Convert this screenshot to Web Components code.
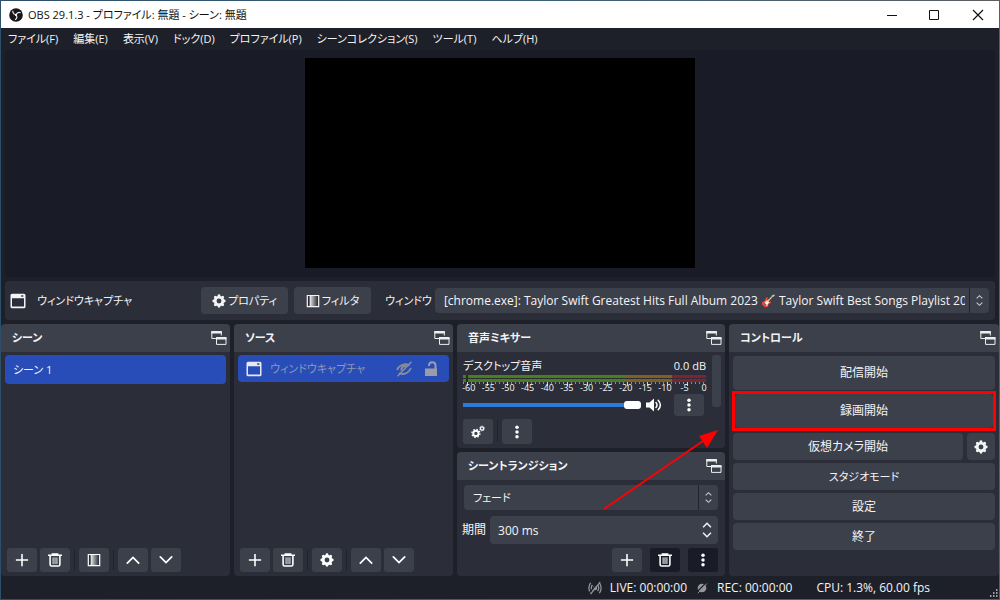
<!DOCTYPE html>
<html lang="ja">
<head>
<meta charset="utf-8">
<title>OBS 29.1.3 - プロファイル: 無題 - シーン: 無題</title>
<style>
html, body { height: 100%; margin: 0; }
body {
  --frame: #1e2029; --panel: #2b2e38; --raised: #3c404b; --deep: #191b26; --accent: #284cb8;
  background: linear-gradient(90deg, #2c5068, #38617c 50%, #5c5f62);
  color: #f4f4f6;
  font: 12px/16px "Open Sans", "Noto Sans CJK JP", sans-serif;
  font-feature-settings: "palt";
}
</style>
</head>
<body>
<obs-window></obs-window>
<script>
const define = (name, html, setup) => {
  const template = document.createElement('template');
  template.innerHTML = html;
  customElements.define(name, class extends HTMLElement {
    constructor() {
      super();
      this.attachShadow({ mode: 'open' }).append(template.content.cloneNode(true));
    }
    connectedCallback() { if (setup) setup(this, this.shadowRoot); }
  });
};

const S = 'fill="none" stroke="currentColor"';
const ICONS = {
  plus: `<path ${S} stroke-width="1.8" d="M8 1v14M1 8h14"/>`,
  trash: `<path ${S} stroke-width="1.8" d="M0 2.600h16M5 2V1.200h6V2M2.400 3v10q0 1.900 1.900 1.900h7.400q1.900 0 1.900-1.900V3"/><path fill="#aeb0b8" d="M5 5h6v7.500H5z"/><path stroke="#555965" stroke-width=".6" d="M7 5v7.500M9 5v7.500"/>`,
  filter: `<defs><linearGradient id="g"><stop stop-color="#fff"/><stop offset=".25" stop-color="#bbb"/><stop offset="1" stop-color="#24262e"/></linearGradient></defs><path fill="url(#g)" d="M4 2h10v12H4z"/><path ${S} stroke-width="1.4" d="M1.5 1.7h13v12.6h-13z"/><path fill="#24262e" d="M2.5 2.5h1.4v11H2.5z"/>`,
  up: `<path ${S} stroke-width="2" stroke-linecap="round" d="M1.500 11.500L8 5l6.500 6.500"/>`,
  down: `<path ${S} stroke-width="2" stroke-linecap="round" d="M1.500 4.500L8 11l6.500-6.500"/>`,
  gear: `<circle cx="8" cy="8" r="4.400" ${S} stroke-width="3.200"/><path stroke="currentColor" stroke-width="3.200" stroke-linecap="round" d="M8 2.300V2M8 13.700v.3M2.300 8H2M13.700 8h.3M4 4l-.2-.2M12 12l.2.2M4 12l-.2.2M12 4l.2-.2"/>`,
  gears: `<circle cx="5.6" cy="9.6" r="3" ${S} stroke-width="2.2"/><circle cx="5.6" cy="9.6" r="4.6" ${S} stroke-width="1.4" stroke-dasharray="1.8 1.8"/><circle cx="12.6" cy="4" r="1.8" ${S} stroke-width="1.4"/><circle cx="12.6" cy="4" r="2.8" ${S} stroke-width=".9" stroke-dasharray="1.1 1.1"/>`,
  dots: `<g fill="currentColor"><circle cx="8" cy="2.5" r="2"/><circle cx="8" cy="8" r="2"/><circle cx="8" cy="13.5" r="2"/></g>`,
  window: `<path fill="currentColor" fill-rule="evenodd" d="M2 .8h12q1.500 0 1.500 1.500v11.400q0 1.500-1.500 1.500H2q-1.500 0-1.500-1.500V2.300Q.5.8 2 .8zM2 5.300v8.200h12V5.300z"/><path stroke="#4a4e5a" stroke-width="1" d="M11.300 2l2 2M13.300 2l-2 2"/>`,
  float: `<path ${S} stroke-width="1" d="M5 8.500H.8V1.500h9.500v4"/><path fill="currentColor" d="M.3.9h10.500v2.500H.3zM5 6.900h10.500v2.500H5z"/><path ${S} stroke-width="1" d="M5.500 8v6.400H15V8"/>`,
  eye: `<path ${S} stroke-width="1.800" d="M1 9c2-5 9-7.500 12.500-4.500M15 7c-2 5-8 7.500-12 5"/><path ${S} stroke-width="2" d="M5.500 9.500C5 6 8 4 10.500 5.500"/><path ${S} stroke-width="1.500" d="M15.500.8L1.500 15.200"/>`,
  lock: `<path fill="currentColor" d="M2 7.500h12V15H2z"/><path ${S} stroke-width="2" d="M6 5V4.500C6 0 12.500 0 12.500 4.500V8"/>`,
  speaker: `<path fill="currentColor" d="M0 5.500h3.500L8 1.500v13l-4.500-4H0z"/><path ${S} stroke-width="1.500" stroke-linecap="round" d="M10 5.500q2 2.500 0 5M12.200 3.200q4.300 4.800 0 9.600"/>`,
  spin: `<path ${S} stroke-width="1.300" d="M4.500 5.500L8 2l3.500 3.500M4.500 10.500L8 14l3.500-3.500"/>`,
  live: `<path ${S} stroke-width="1.400" d="M3 2Q-1 8 3 14M13 2q4 6 0 12M5 4.500Q2.500 8 5 11.500M11 4.500q2.500 3.500 0 7"/><circle cx="8" cy="8" r="2.500" fill="currentColor"/><path stroke="#1e2029" stroke-width="1.500" d="M13 0L1 14"/><path ${S} stroke-width="1.300" d="M14 1L3 15"/>`,
  rec: `<circle cx="8" cy="8" r="5.800" fill="currentColor"/><path stroke="#1e2029" stroke-width="1.500" d="M13.500 1L1.500 13"/><path ${S} stroke-width="1.300" d="M14.500 2L2.500 15"/>`,
  logo: `<circle cx="8" cy="8" r="7.800" fill="#17171b"/><g fill="none" stroke="#e8e8e8" stroke-width="1.300"><path d="M4.300 3q0 4 4 4.700"/><path d="M13.300 5.500q-3.500-1.500-5.300 2.300"/><path d="M6.800 13.500q3.500-2 1.500-5.500"/></g><circle cx="8" cy="8" r="1.300" fill="#fff"/>`,
  min: `<path ${S} d="M3 8.500h10"/>`,
  max: `<path ${S} stroke-width="1" d="M2.500 3.500h9v9h-9z"/>`,
  close: `<path ${S} stroke-width="1.200" d="M3 3l10 10M13 3L3 13"/>`,
  grip: `<g fill="#c8c8cc"><path d="M12 3h2v2h-2zM12 7h2v2h-2zM12 11h2v2h-2zM8 7h2v2H8zM8 11h2v2H8zM4 11h2v2H4z"/></g>`
};
define('obs-icon', `<style>
:host { display: inline-flex; flex: none; width: 16px; height: 16px; }
svg { width: 100%; height: 100%; display: block; }
</style><svg viewBox="0 0 16 16" aria-hidden="true"></svg>`,
  (el, root) => { root.querySelector('svg').innerHTML = ICONS[el.getAttribute('name')]; });

define('tool-button', `<style>
:host { display: block; flex: none; width: 30px; height: 24px; }
button { width: 100%; height: 100%; padding: 0; border: 0; border-radius: 3px; background: var(--raised); color: #fff; display: grid; place-items: center; }
:host([dark]) button { background: var(--deep); }
obs-icon { width: 14px; height: 14px; }
</style><button><obs-icon></obs-icon></button>`,
  (el, root) => {
    root.querySelector('button').setAttribute('aria-label', el.getAttribute('label'));
    const icon = document.createElement('obs-icon');
    icon.setAttribute('name', el.getAttribute('icon'));
    root.querySelector('obs-icon').replaceWith(icon);
  });

define('push-button', `<style>
:host { display: block; flex: none; }
button { width: 100%; height: 100%; padding: 0 8px; border: 0; border-radius: 4px; background: var(--raised); color: inherit; font: inherit; font-feature-settings: inherit; display: flex; align-items: center; justify-content: center; gap: 2px; white-space: nowrap; }
</style><button><slot></slot></button>`);

define('select-box', `<style>
:host { display: block; position: relative; min-width: 0; height: 25px; }
select { appearance: none; width: 100%; height: 100%; border: 0; border-radius: 4px; background: linear-gradient(#22242d, #22242d) right 19px top / 1px 100% no-repeat var(--raised); color: inherit; font: inherit; font-feature-settings: inherit; padding: 0 24px 0 9px; }
.spin { position: absolute; right: 3px; top: 6px; width: 13px; height: 13px; color: #c8cad0; pointer-events: none; }
</style><select></select><obs-icon class="spin" name="spin"></obs-icon>`,
  (el, root) => {
    const select = root.querySelector('select');
    select.setAttribute('aria-label', el.getAttribute('label'));
    select.add(new Option(el.getAttribute('value')));
  });

define('title-bar', `<style>
:host { display: flex; flex: none; align-items: center; height: 27px; padding-left: 8px; background: #fff; color: #111; font-size: 11px; }
.text { flex: 1; margin-left: 5px; white-space: nowrap; }
button { width: 43px; height: 26px; border: 0; padding: 0; background: none; color: #111; display: grid; place-items: center; }
.logo { width: 14px; height: 14px; }
</style><obs-icon class="logo" name="logo"></obs-icon><span class="text">OBS 29.1.3 - プロファイル: 無題 - シーン: 無題</span>
<button aria-label="最小化"><obs-icon name="min"></obs-icon></button><button aria-label="最大化"><obs-icon name="max"></obs-icon></button><button aria-label="閉じる"><obs-icon name="close"></obs-icon></button>`);

define('menu-bar', `<style>
:host { display: block; flex: none; }
nav { display: flex; align-items: center; gap: 15px; height: 22px; padding: 0 7px; font-size: 11px; }
a { color: inherit; text-decoration: none; white-space: nowrap; }
</style><nav><a href="#file">ファイル(F)</a><a href="#edit">編集(E)</a><a href="#view">表示(V)</a><a href="#dock">ドック(D)</a><a href="#profile">プロファイル(P)</a><a href="#scenes">シーンコレクション(S)</a><a href="#tools">ツール(T)</a><a href="#help">ヘルプ(H)</a></nav>`);

define('preview-area', `<style>
:host { display: flex; flex: 1; min-height: 100px; justify-content: center; padding: 8px 0 9px; margin: 0 4px; background: var(--deep); }
div { width: 39.3%; background: #000; }
</style><div></div>`);

define('source-toolbar', `<style>
:host { display: flex; flex: none; align-items: center; height: 39px; margin: 4px 4px; padding: 0 6px 0 5px; background: var(--panel); border-radius: 4px; }
.name { flex: 1 1 0; margin-left: 11px; white-space: nowrap; }
.jp { font-size: 11px; }
push-button { height: 27px; margin-right: 6px; }
push-button obs-icon { width: 14px; height: 14px; }
.props { width: 87px; } .filt { width: 77px; }
.label { margin: 0 3px 0 8px; }
select-box { flex: 0 0 56.6%; }
</style><obs-icon name="window"></obs-icon><span class="name jp">ウィンドウキャプチャ</span>
<push-button class="props jp"><obs-icon name="gear"></obs-icon>プロパティ</push-button>
<push-button class="filt jp"><obs-icon name="filter"></obs-icon>フィルタ</push-button>
<span class="label jp">ウィンドウ</span>
<select-box label="ウィンドウ" value="[chrome.exe]: Taylor Swift Greatest Hits Full Album 2023 🎸 Taylor Swift Best Songs Playlist 2023"></select-box>`);

define('dock-panel', `<style>
:host { display: flex; flex-direction: column; min-width: 0; background: var(--panel); border-radius: 4px; overflow: hidden; }
header { display: flex; flex: none; align-items: center; justify-content: space-between; height: 28px; padding: 0 3px 0 11px; background: var(--raised); }
h2 { margin: 0; font-size: 11px; line-height: 16px; font-weight: 600; }
button { border: 0; padding: 0; background: none; color: #eee; display: flex; }
.body { flex: 1; display: flex; flex-direction: column; }
</style><header><h2></h2><button aria-label="フロート"><obs-icon name="float"></obs-icon></button></header><div class="body"><slot></slot></div>`,
  (el, root) => { root.querySelector('h2').textContent = el.getAttribute('heading'); });

define('tool-row', `<style>
:host { display: flex; gap: 3px; margin-top: auto; padding: 0 6px 4px; }
::slotted(i) { width: 1px; height: 20px; margin: 2px 1px; background: #20222a; }
</style><slot></slot>`);

define('list-row', `<style>
:host { display: flex; align-items: center; height: 29px; margin: 3px 4px; padding: 0 8px; border-radius: 4px; background: var(--accent); font-size: 11px; }
:host([source]) { height: 27px; color: #8f98b4; }
</style><slot></slot>`);

define('audio-mixer', `<style>
:host { display: flex; flex: 1; flex-direction: column; padding: 3px 4px 4px 6px; }
.view { display: flex; height: 60px; gap: 6px; }
.channel { flex: 1; min-width: 0; }
.top { display: flex; justify-content: space-between; height: 20px; line-height: 21px; font-size: 11px; }
.bar { height: 3px; margin-bottom: 1px; background: linear-gradient(90deg, #4c7d1c 3px, #23301c 3px 5px, #4c7d1c 5px 67%, #80601c 67% 86%, #7d2430 86%); }
.scale { height: 4px; margin-top: -1px; background: repeating-linear-gradient(90deg, transparent 0 4px, #d0d0d5 4px 5px, transparent 5px 20px) 0 0, repeating-linear-gradient(90deg, #888b94 0 1px, transparent 1px 4px) 0 0 / 100% 2px no-repeat; }
.nums { display: grid; grid-template-columns: repeat(13, 1fr); margin: -3px -8px 0 -4px; font-size: 9px; line-height: 10px; text-align: center; }
.fader { display: flex; align-items: center; height: 22px; margin-top: 1px; }
input { appearance: none; flex: 1; min-width: 0; margin: 0; height: 8px; background: linear-gradient(#2c7bd8, #2c7bd8) center / 100% 4px no-repeat; }
input::-webkit-slider-thumb { appearance: none; width: 17px; height: 8px; border-radius: 3px; background: #fff; }
.mute { border: 0; padding: 0; margin: 0 12px 0 5px; background: none; color: #fff; display: flex; }
.fader tool-button { height: 22px; margin-right: 2px; }
.bar-v { width: 9px; height: 52px; border-radius: 3px; background: var(--raised); }
.tools { display: flex; gap: 4px; margin-top: auto; }
.tools i { width: 1px; height: 20px; margin-top: 2px; background: #20222a; }
.tools tool-button { height: 25px; }
</style>
<div class="view"><div class="channel">
<div class="top"><span>デスクトップ音声</span><span>0.0 dB</span></div>
<div class="bar"></div><div class="bar"></div><div class="scale"></div>
<div class="nums"><span>-60</span><span>-55</span><span>-50</span><span>-45</span><span>-40</span><span>-35</span><span>-30</span><span>-25</span><span>-20</span><span>-15</span><span>-10</span><span>-5</span><span>0</span></div>
<div class="fader"><input type="range" value="100" aria-label="デスクトップ音声"><button class="mute" aria-label="ミュート"><obs-icon name="speaker"></obs-icon></button><tool-button icon="dots" label="メニュー"></tool-button></div>
</div><div class="bar-v"></div></div>
<div class="tools"><tool-button icon="gears" label="詳細設定"></tool-button><i></i><tool-button icon="dots" label="メニュー"></tool-button></div>`);

define('scene-transition', `<style>
:host { display: flex; flex: 1; flex-direction: column; padding: 5px 7px 4px 5px; }
select-box { margin-left: 2px; font-size: 11px; }
.row { display: flex; align-items: center; gap: 4px; margin-top: 6px; }
.field { position: relative; flex: 1; height: 28px; }
input { box-sizing: border-box; width: 100%; height: 100%; border: 0; border-radius: 4px; padding: 0 8px; background: var(--raised); color: inherit; font: inherit; }
.spin { position: absolute; right: 2px; top: 4px; width: 18px; height: 20px; }
.tools { display: flex; justify-content: flex-end; gap: 8px; margin-top: auto; }
</style><select-box label="トランジション" value="フェード"></select-box>
<div class="row"><label for="time">期間</label><div class="field"><input id="time" value="300 ms"><obs-icon class="spin" name="spin"></obs-icon></div></div>
<div class="tools"><tool-button icon="plus" label="追加"></tool-button><tool-button dark icon="trash" label="削除"></tool-button><tool-button dark icon="dots" label="メニュー"></tool-button></div>`);

define('control-list', `<style>
:host { display: flex; flex-direction: column; gap: 4px; padding: 4px 4px 0; }
push-button { height: 27px; }
.big { height: 34px; }
.record { height: 34px; border: 3px solid #f00; margin: -3px -1px -2px; }
.pair { display: flex; gap: 4px; }
.pair push-button:first-child { flex: 1; }
.rest { display: flex; flex-direction: column; gap: 3px; }
.kana { font-size: 11px; }
.gear { width: 28px; }
.gear obs-icon { width: 14px; height: 14px; }
</style><push-button class="big">配信開始</push-button><push-button class="record">録画開始</push-button>
<div class="rest"><div class="pair"><push-button>仮想カメラ開始</push-button><push-button class="gear"><obs-icon name="gear"></obs-icon></push-button></div>
<push-button class="kana">スタジオモード</push-button><push-button>設定</push-button><push-button>終了</push-button></div>`);

define('status-bar', `<style>
:host { display: flex; flex: none; align-items: center; justify-content: flex-end; height: 23px; font-size: 12px; white-space: nowrap; }
obs-icon { color: #96979c; }
.live { width: 18px; height: 14px; margin-right: 6px; } .rec { width: 12px; height: 12px; margin: 0 9px; }
.cpu { margin: 0 57px 0 24px; }
.grip { align-self: flex-end; width: 12px; height: 12px; }
</style><obs-icon class="live" name="live"></obs-icon><span>LIVE: 00:00:00</span><obs-icon class="rec" name="rec"></obs-icon><span>REC: 00:00:00</span><span class="cpu">CPU: 1.3%, 60.00 fps</span><obs-icon class="grip" name="grip"></obs-icon>`);

define('obs-window', `<style>
:host { display: flex; flex-direction: column; box-sizing: border-box; min-height: 100vh; padding: 1px; }
main { position: relative; flex: 1; display: flex; flex-direction: column; background: var(--frame); }
.docks { display: grid; flex: none; grid-template-columns: 229fr 219fr 268fr 270fr; gap: 4px; height: 252px; }
.stack { display: flex; flex-direction: column; gap: 4px; min-width: 0; }
.stack > :first-child, .stack > :last-child { flex: 1; }
.src { flex: 1; margin-left: 8px; }
.eye { color: #8a8f9e; margin-right: 11px; } .lock { color: #9a9da8; margin-right: 2px; }
.arrow { position: absolute; left: 602px; top: 426px; width: 116px; height: 84px; pointer-events: none; }
</style>
<main><title-bar></title-bar><menu-bar></menu-bar><preview-area></preview-area><source-toolbar></source-toolbar>
<div class="docks">
<dock-panel heading="シーン"><list-row>シーン 1</list-row><tool-row><tool-button icon="plus" label="追加"></tool-button><tool-button icon="trash" label="削除"></tool-button><i></i><tool-button icon="filter" label="フィルタ"></tool-button><i></i><tool-button icon="up" label="上へ"></tool-button><tool-button icon="down" label="下へ"></tool-button></tool-row></dock-panel>
<dock-panel heading="ソース"><list-row source><obs-icon name="window" style="color:#e6e9f4"></obs-icon><span class="src">ウィンドウキャプチャ</span><obs-icon class="eye" name="eye"></obs-icon><obs-icon class="lock" name="lock"></obs-icon></list-row><tool-row><tool-button icon="plus" label="追加"></tool-button><tool-button icon="trash" label="削除"></tool-button><i></i><tool-button icon="gear" label="プロパティ"></tool-button><i></i><tool-button icon="up" label="上へ"></tool-button><tool-button icon="down" label="下へ"></tool-button></tool-row></dock-panel>
<div class="stack"><dock-panel heading="音声ミキサー"><audio-mixer></audio-mixer></dock-panel><dock-panel heading="シーントランジション"><scene-transition></scene-transition></dock-panel></div>
<dock-panel heading="コントロール"><control-list></control-list></dock-panel>
</div>
<status-bar></status-bar>
<svg class="arrow" viewBox="0 0 116 84" aria-hidden="true"><path d="M1 82L100 14" stroke="#f00" stroke-width="2"/><path d="M115 3L96 9l8 12z" fill="#f00"/></svg>
</main>`);
</script>
</body>
</html>
